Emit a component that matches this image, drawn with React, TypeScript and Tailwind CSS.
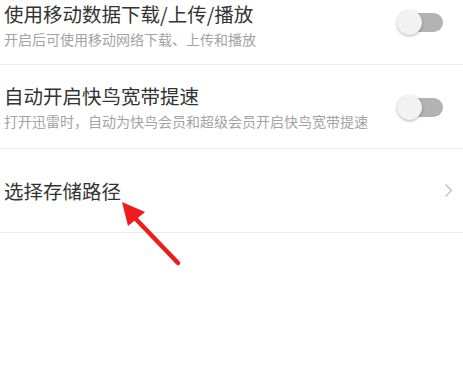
import React from "react";

const rows = [
  {
    title: "使用移动数据下载/上传/播放",
    desc: "开启后可使用移动网络下载、上传和播放",
    pad: "pt-[1px] pb-[15px]",
    toggleShift: "-mt-[6px]",
  },
  {
    title: "自动开启快鸟宽带提速",
    desc: "打开迅雷时，自动为快鸟会员和超级会员开启快鸟宽带提速",
    pad: "pt-[18px] pb-[17px]",
    toggleShift: "",
  },
];

function Toggle({ className = "" }: { className?: string }) {
  return (
    <div className={`relative w-[46px] h-[26px] flex items-center shrink-0 ${className}`}>
      <div className="absolute right-0 w-[40px] h-[19px] rounded-full bg-[#b3b3b3]" />
      <div className="absolute left-0 w-[25px] h-[25px] rounded-full bg-[#f2f2f2] shadow-[0_1px_3px_rgba(0,0,0,0.3)]" />
    </div>
  );
}

export default function App() {
  return (
    <div
      className="relative w-[463px] h-[376px] overflow-hidden bg-white"
      style={{ fontFamily: '"Noto Sans CJK SC", "Noto Sans", sans-serif' }}
    >
      {rows.map((r) => (
        <div
          key={r.title}
          className={`flex items-center justify-between pl-[4px] pr-[20px] border-b border-[#ececec] ${r.pad}`}
        >
          <div className="flex flex-col">
            <span className="text-[19.5px] leading-[26px] text-[#333333]">{r.title}</span>
            <span className="text-[14px] leading-[20px] mt-[2px] text-[#a3a3a3]">{r.desc}</span>
          </div>
          <Toggle className={r.toggleShift} />
        </div>
      ))}
      <div className="flex items-center justify-between h-[84px] pl-[4px] pr-[10px] border-b border-[#ececec]">
        <span className="text-[19.5px] leading-[26px] text-[#333333]">选择存储路径</span>
        <svg width="9" height="15" viewBox="0 0 9 15" fill="none">
          <path d="M1.5 1.5 L7.5 7.5 L1.5 13.5" stroke="#bdbdbd" strokeWidth="1.3" />
        </svg>
      </div>

      <svg
        className="absolute left-0 top-0 pointer-events-none"
        width="463"
        height="376"
        viewBox="0 0 463 376"
      >
        <line x1="178" y1="263" x2="133" y2="216" stroke="#ee1c1c" strokeWidth="4.5" strokeLinecap="round" />
        <polygon points="122,202 145,212 128,226" fill="#ee1c1c" />
      </svg>
    </div>
  );
}
